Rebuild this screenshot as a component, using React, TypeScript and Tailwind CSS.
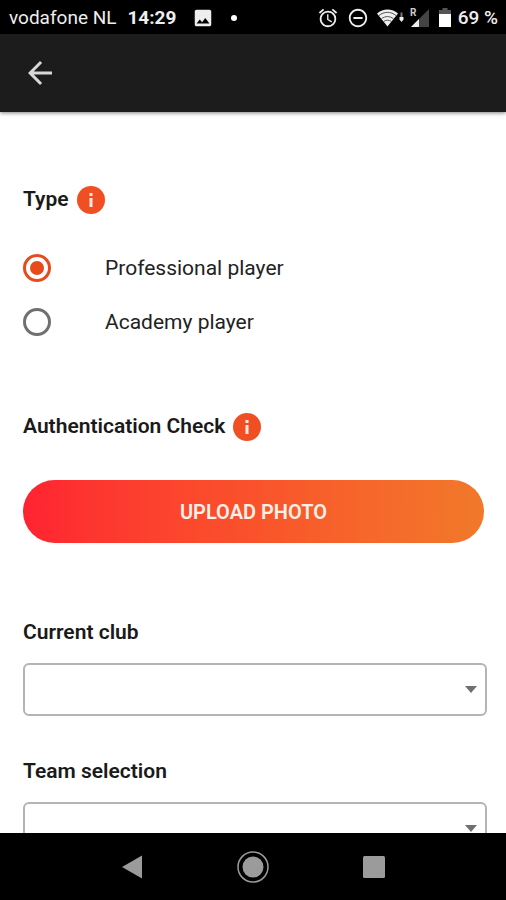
import { MdAlarm, MdArrowBack, MdImage, MdRemoveCircleOutline } from "react-icons/md";

function StatusBar() {
  return (
    <div className="h-[34px] shrink-0 bg-black text-[#eeeeee] flex items-center justify-between pl-[9px] pr-2 pt-[2px]">
      <div className="flex items-center text-[19px] leading-6 whitespace-nowrap">
        <span>vodafone NL</span>
        <span className="font-bold ml-[11px]">14:29</span>
        <MdImage className="w-[22px] h-[22px] ml-4" />
        <span className="w-[6px] h-[6px] rounded-full bg-white ml-[17px]" />
      </div>

      <div className="flex items-center whitespace-nowrap">
        <MdAlarm className="w-[22px] h-[22px]" />
        <MdRemoveCircleOutline className="w-[22px] h-[22px] ml-2" />
        <WifiIcon />
        <SignalIcon />
        <BatteryIcon />
        <span className="text-[19px] leading-6 font-medium ml-[7px]">69 %</span>
      </div>
    </div>
  );
}

function WifiIcon() {
  return (
    <svg viewBox="0 0 28 20" className="w-7 h-5 ml-2" aria-hidden="true">
      <path d="M0 5.5C6 .2 15 .2 21 5.5L10.5 18.5Z" fill="#eeeeee" />
      <path
        d="M2 7.500C7 3.300 14 3.300 19 7.500M4.500 10.700c3.500-2.800 8.500-2.800 12 0M6.500 13.500c2.400-1.700 5.600-1.700 8 0"
        fill="none"
        stroke="#555"
        strokeWidth="1"
      />
      <path d="M24.500 4.500v5" stroke="#777" strokeWidth="2" />
      <path d="M22.500 9h4v2.500l-2 2.500-2-2.500z" fill="#eeeeee" />
    </svg>
  );
}

function SignalIcon() {
  return (
    <svg viewBox="0 0 20 20" className="w-5 h-5 ml-[5px]" aria-hidden="true">
      <path d="M19 1v18H1z" fill="#444" />
      <path d="M9 11v8H1z" fill="#eeeeee" />
      <text x="0" y="8" fontSize="10" fontWeight="700" fill="#cccccc">
        R
      </text>
    </svg>
  );
}

function BatteryIcon() {
  return (
    <svg viewBox="0 0 12 20" className="w-3 h-5 ml-[9px]" aria-hidden="true">
      <path d="M3.500 0h5v2H12v5H0V2h3.500z" fill="#555" />
      <path d="M0 6h12v13H0z" fill="#fff" />
    </svg>
  );
}

function InfoButton({ label }: { label: string }) {
  return (
    <button type="button" aria-label={label} className="w-7 h-7 shrink-0">
      <svg viewBox="0 0 28 28" className="w-7 h-7">
        <circle cx="14" cy="14" r="14" fill="#f04e23" />
        <path d="M12.500 7h3v3h-3zM12.500 12h3v9h-3z" fill="#ffe9e0" />
      </svg>
    </button>
  );
}

function RadioRow({ label, value, defaultChecked }: { label: string; value: string; defaultChecked?: boolean }) {
  return (
    <label className="flex items-center h-[54px] gap-[54px] text-[21px] leading-[54px] text-[#222222]">
      <input
        type="radio"
        name="playerType"
        value={value}
        defaultChecked={defaultChecked}
        className="appearance-none w-7 h-7 shrink-0 rounded-full border-3 border-[#707070] p-1 bg-clip-content checked:border-[#e84a1c] checked:bg-[#e84a1c]"
      />
      {label}
    </label>
  );
}

function SelectField({ id, label }: { id: string; label: string }) {
  return (
    <div className="flex flex-col gap-4">
      <label htmlFor={id} className="text-[21px] leading-[30px] font-semibold">
        {label}
      </label>
      <div className="relative -mr-[3px]">
        <select
          id={id}
          className="appearance-none block w-full h-[53px] px-4 rounded-md border-2 border-[#b4b4b4] bg-white text-[21px]"
        >
          <option value=""></option>
        </select>
        <svg
          viewBox="0 0 12 7"
          className="absolute right-[10px] top-[23px] w-3 h-[7px] pointer-events-none"
          aria-hidden="true"
        >
          <path d="M0 0h12L6 7z" fill="#707070" />
        </svg>
      </div>
    </div>
  );
}

export default function App() {
  return (
    <div className="h-screen flex flex-col bg-white text-[#1a1a1a] font-['Roboto',sans-serif]">
      <StatusBar />

      <header className="h-[78px] shrink-0 bg-[#1c1c1c] flex items-center px-[22px] shadow-[0_1px_4px_rgba(0,0,0,0.5)] z-10">
        <button type="button" aria-label="Back" className="text-[#d8d8d8]">
          <MdArrowBack className="w-9 h-9" />
        </button>
      </header>

      <main className="flex-1 min-h-0 overflow-y-auto [scrollbar-width:none] pl-[23px] pr-[22px] pt-[72px]">
        <section>
          <div className="flex items-center gap-2 h-8">
            <h2 id="type-title" className="text-[21px] leading-8 pb-[2px] font-semibold">
              Type
            </h2>
            <InfoButton label="About player type" />
          </div>
          <div role="radiogroup" aria-labelledby="type-title" className="mt-[25px]">
            <RadioRow label="Professional player" value="professional" defaultChecked />
            <RadioRow label="Academy player" value="academy" />
          </div>
        </section>

        <section className="mt-[62px]">
          <div className="flex items-center gap-2 h-8">
            <h2 className="text-[21px] leading-8 pb-[2px] font-semibold">Authentication Check</h2>
            <InfoButton label="About authentication check" />
          </div>
          <button
            type="button"
            className="mt-[37px] w-full h-[63px] rounded-full bg-linear-to-r from-[#ff2231] via-[#fa522b] to-[#f1792a] text-[#fff0e8] text-xl font-semibold"
          >
            UPLOAD PHOTO
          </button>
        </section>

        <section className="mt-[74px] flex flex-col gap-10 pb-10">
          <SelectField id="current-club" label="Current club" />
          <SelectField id="team-selection" label="Team selection" />
        </section>
      </main>

      <nav className="h-[67px] shrink-0 bg-black grid grid-cols-3 items-center justify-items-center px-[71px]">
        <button type="button" aria-label="Back">
          <svg viewBox="0 0 32 32" className="w-8 h-8">
            <path d="M26 4.500v23L6 16z" fill="#9b9b9b" />
          </svg>
        </button>
        <button type="button" aria-label="Home">
          <svg viewBox="0 0 32 32" className="w-8 h-8">
            <circle cx="16" cy="16" r="15" fill="none" stroke="#9b9b9b" strokeWidth="1.500" />
            <circle cx="16" cy="16" r="10.500" fill="#9b9b9b" />
          </svg>
        </button>
        <button type="button" aria-label="Recent apps">
          <svg viewBox="0 0 32 32" className="w-8 h-8">
            <rect x="5" y="5" width="22" height="22" rx="1.500" fill="#9b9b9b" />
          </svg>
        </button>
      </nav>
    </div>
  );
}
